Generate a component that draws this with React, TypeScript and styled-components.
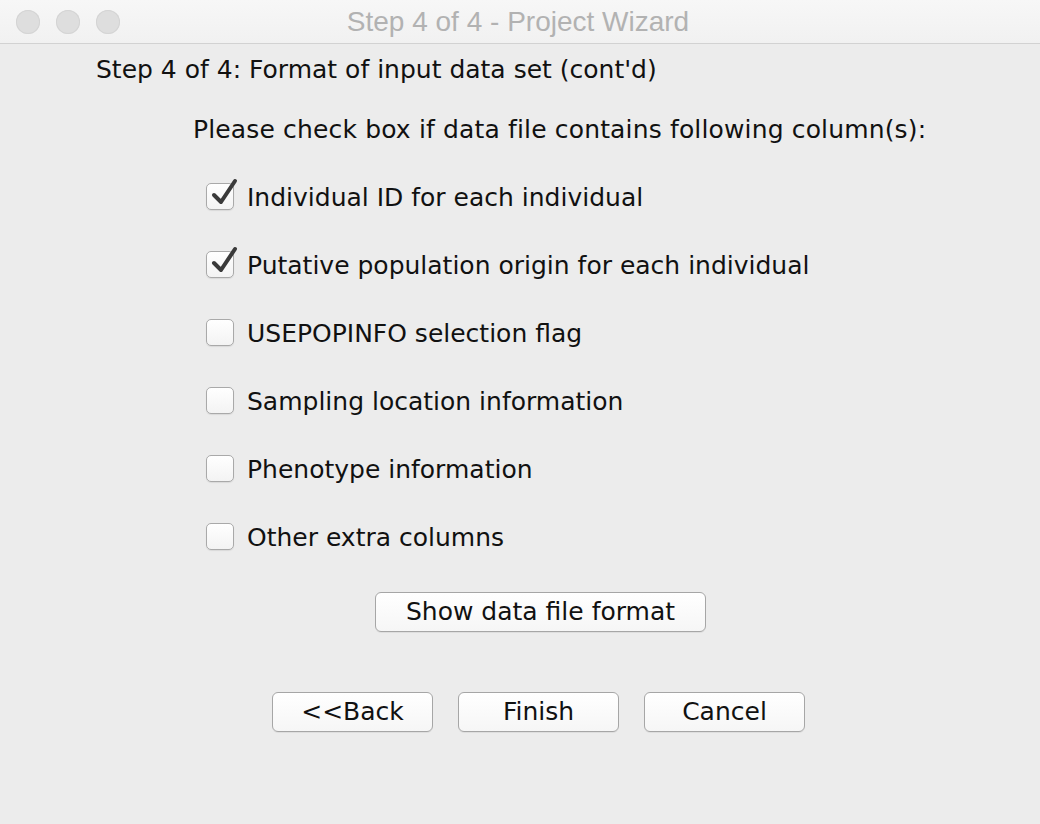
import React from "react";
import styled, { createGlobalStyle } from "styled-components";

const Global = createGlobalStyle`
  html, body { margin: 0; padding: 0; background: #ececec; }
  body { font-family: "DejaVu Sans", "Liberation Sans", sans-serif; }
`;

const Window = styled.div`
  width: 1040px;
  height: 824px;
  background: #ececec;
  display: flex;
  flex-direction: column;
  overflow: hidden;
`;

const TitleBar = styled.div`
  height: 43px;
  flex: none;
  background: linear-gradient(#f7f7f7, #f1f1f1);
  border-bottom: 1px solid #d2d2d2;
  display: grid;
  grid-template-columns: 1fr auto 1fr;
  align-items: center;
`;

const Lights = styled.div`
  display: flex;
  gap: 16px;
  padding-left: 16px;
`;

const Light = styled.span`
  width: 24px;
  height: 24px;
  border-radius: 50%;
  background: #dedede;
  box-shadow: inset 0 0 0 1px #d4d4d4;
`;

const Title = styled.div`
  font-family: "Liberation Sans", Arial, sans-serif;
  font-size: 28px;
  color: #b2b2b2;
  padding-top: 1px;
  margin-left: -4px;
`;

const Content = styled.div`
  display: flex;
  flex-direction: column;
  color: #111;
`;

const Heading = styled.div`
  margin-top: 9px;
  padding-left: 96px;
  line-height: 34px;
  font-size: 25px;
`;

const Sub = styled.div`
  margin-top: 26px;
  padding-left: 193px;
  line-height: 34px;
  font-size: 25px;
  letter-spacing: 0.15px;
`;

const List = styled.div`
  margin-top: 16px;
  padding-left: 206px;
  display: flex;
  flex-direction: column;
`;

const Row = styled.label`
  height: 68px;
  display: flex;
  align-items: center;
  gap: 13px;
  font-size: 25px;
`;

const Box = styled.span`
  position: relative;
  width: 28px;
  height: 27px;
  margin-top: -2px;
  box-sizing: border-box;
  border: 1px solid #a9a9a9;
  border-radius: 5px;
  background: linear-gradient(#ffffff, #f3f3f3);
  box-shadow: 0 1px 1px rgba(0, 0, 0, 0.08);
  flex: none;
`;

const Check = styled.svg`
  position: absolute;
  left: 3px;
  top: -7px;
`;

const ShowWrap = styled.div`
  margin-top: 21px;
  padding-left: 375px;
  display: flex;
`;

const Button = styled.button<{ $w: number }>`
  width: ${(p) => p.$w}px;
  height: 40px;
  box-sizing: border-box;
  border: 1px solid #a6a6a6;
  border-radius: 6px;
  background: linear-gradient(#ffffff, #f6f6f6);
  box-shadow: 0 1px 0 rgba(0, 0, 0, 0.06);
  font-family: "DejaVu Sans", "Liberation Sans", sans-serif;
  font-size: 25px;
  color: #111;
  padding: 0;
  line-height: 36px;
`;

const Buttons = styled.div`
  margin-top: 60px;
  padding-left: 272px;
  display: flex;
  gap: 25px;
`;

const items: [string, boolean][] = [
  ["Individual ID for each individual", true],
  ["Putative population origin for each individual", true],
  ["USEPOPINFO selection flag", false],
  ["Sampling location information", false],
  ["Phenotype information", false],
  ["Other extra columns", false],
];

export default function App() {
  return (
    <Window>
      <Global />
      <TitleBar>
        <Lights>
          <Light />
          <Light />
          <Light />
        </Lights>
        <Title>Step 4 of 4 - Project Wizard</Title>
        <div />
      </TitleBar>
      <Content>
        <Heading>Step 4 of 4: Format of input data set (cont'd)</Heading>
        <Sub>Please check box if data file contains following column(s):</Sub>
        <List>
          {items.map(([t, c]) => (
            <Row key={t}>
              <Box>
                {c && (
                  <Check width="30" height="30" viewBox="0 0 30 30">
                    <path d="M4 18 L11 25 L25 4" fill="none" stroke="#3a3a3a" strokeWidth="4" strokeLinecap="round" strokeLinejoin="round" />
                  </Check>
                )}
              </Box>
              {t}
            </Row>
          ))}
        </List>
        <ShowWrap>
          <Button $w={331}>Show data file format</Button>
        </ShowWrap>
        <Buttons>
          <Button $w={161}>&lt;&lt;Back</Button>
          <Button $w={161}>Finish</Button>
          <Button $w={161}>Cancel</Button>
        </Buttons>
      </Content>
    </Window>
  );
}
